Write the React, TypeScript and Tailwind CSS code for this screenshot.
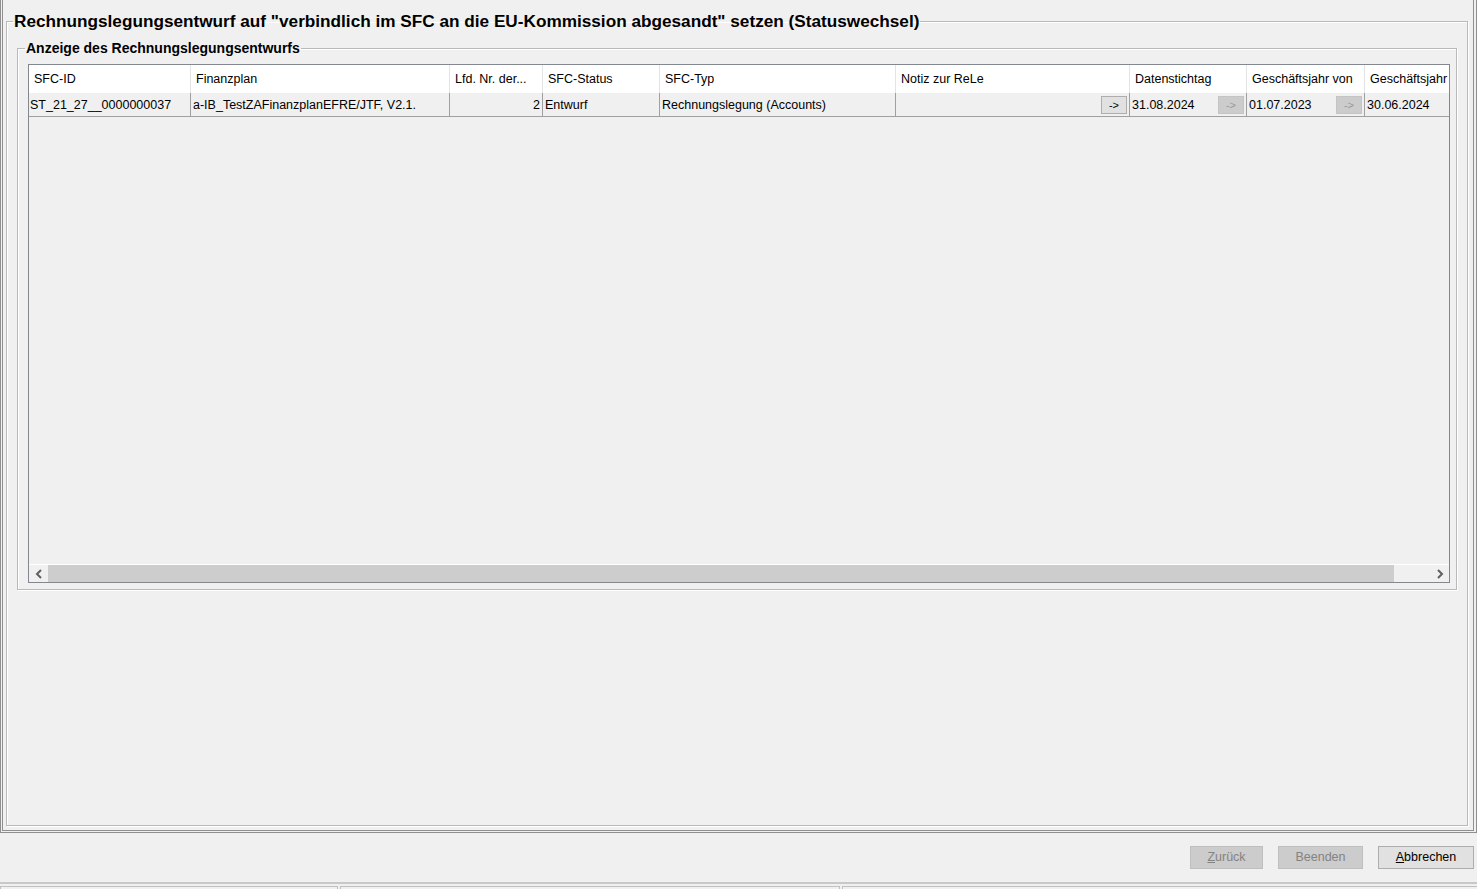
import React from "react";

type Col = { w: number; title: string };

const cols: Col[] = [
  { w: 162, title: "SFC-ID" },
  { w: 259, title: "Finanzplan" },
  { w: 93, title: "Lfd. Nr. der..." },
  { w: 117, title: "SFC-Status" },
  { w: 236, title: "SFC-Typ" },
  { w: 234, title: "Notiz zur ReLe" },
  { w: 117, title: "Datenstichtag" },
  { w: 118, title: "Geschäftsjahr von" },
  { w: 120, title: "Geschäftsjahr bis" },
];

const ArrowBtn: React.FC<{ disabled?: boolean }> = ({ disabled }) => (
  <span
    className={
      disabled
        ? "ml-auto mr-[2px] flex h-[18px] w-[26px] shrink-0 items-center justify-center border border-[#c4c4c4] bg-[#cccccc] text-[11px] text-[#9a9a9a]"
        : "ml-auto mr-[2px] flex h-[18px] w-[26px] shrink-0 items-center justify-center border border-[#adadad] bg-[#e1e1e1] text-[11px] text-black"
    }
  >
    -&gt;
  </span>
);

const rowCells: React.ReactNode[] = [
  <span className="pl-[1px]">ST_21_27__0000000037</span>,
  <span className="pl-[2px]">a-IB_TestZAFinanzplanEFRE/JTF, V2.1.</span>,
  <span className="ml-auto pr-[2px]">2</span>,
  <span className="pl-[2px]">Entwurf</span>,
  <span className="pl-[2px]">Rechnungslegung (Accounts)</span>,
  <ArrowBtn />,
  <>
    <span className="pl-[2px]">31.08.2024</span>
    <ArrowBtn disabled />
  </>,
  <>
    <span className="pl-[2px]">01.07.2023</span>
    <ArrowBtn disabled />
  </>,
  <span className="pl-[2px]">30.06.2024</span>,
];

const App: React.FC = () => {
  return (
    <div className="flex h-[889px] w-[1477px] flex-col overflow-hidden bg-[#f0f0f0] font-['Liberation_Sans',Arial,sans-serif] text-black">
      {/* main wizard panel */}
      <div className="h-[833px] shrink-0 border-b-[3px] border-l-[3px] border-r-[4px] border-double border-[#8f8f8f] pl-[3px] pr-[5px] pb-[4px] pt-[11px]">
        <fieldset className="h-full min-w-0 border border-[#b9b9b9] shadow-[1px_1px_0_#ffffff,inset_1px_1px_0_#ffffff]">
          <legend className="ml-[6px] px-[1px] text-[17.2px] font-bold leading-[20px]">
            Rechnungslegungsentwurf auf "verbindlich im SFC an die EU-Kommission abgesandt" setzen (Statuswechsel)
          </legend>

          <fieldset className="mx-[10px] mt-[10px] h-[549px] min-w-0 border border-[#b9b9b9] shadow-[1px_1px_0_#ffffff,inset_1px_1px_0_#ffffff]">
            <legend className="ml-[7px] px-[1px] text-[14px] font-bold leading-[15px]">
              Anzeige des Rechnungslegungsentwurfs
            </legend>

            <div className="pl-[10px] pr-[6px] pt-[8px]">
              {/* table */}
              <div className="flex h-[519px] flex-col overflow-hidden border border-[#828790] text-[12.5px]">
                <div className="flex h-[28px] shrink-0 bg-white">
                  {cols.map((c) => (
                    <div
                      key={c.title}
                      style={{ width: c.w }}
                      className="flex shrink-0 items-center overflow-hidden whitespace-nowrap border-r border-[#e3e3e3] pl-[5px]"
                    >
                      {c.title}
                    </div>
                  ))}
                </div>
                <div className="flex h-[24px] shrink-0 border-b border-[#a0a0a0]">
                  {cols.map((c, i) => (
                    <div
                      key={c.title}
                      style={{ width: c.w }}
                      className="flex shrink-0 items-center overflow-hidden whitespace-nowrap border-r border-[#a0a0a0] pt-[1px]"
                    >
                      {rowCells[i]}
                    </div>
                  ))}
                </div>
                <div className="flex-1" />
                {/* horizontal scrollbar */}
                <div className="flex h-[18px] shrink-0 items-center border-t border-white">
                  <div className="flex h-full w-[19px] items-center justify-center">
                    <svg width="8" height="10" viewBox="0 0 8 10">
                      <path d="M6 1 L2 5 L6 9" stroke="#606060" strokeWidth="2" fill="none" />
                    </svg>
                  </div>
                  <div className="h-full w-[1346px] bg-[#cdcdcd]" />
                  <div className="flex-1" />
                  <div className="flex h-full w-[19px] items-center justify-center">
                    <svg width="8" height="10" viewBox="0 0 8 10">
                      <path d="M2 1 L6 5 L2 9" stroke="#606060" strokeWidth="2" fill="none" />
                    </svg>
                  </div>
                </div>
              </div>
            </div>
          </fieldset>
        </fieldset>
      </div>

      {/* button bar */}
      <div className="flex flex-1 flex-col">
        <div className="mt-[13px] flex h-[23px] justify-end gap-[15px] pr-[3px] text-[12.5px]">
          <div className="flex w-[73px] items-center justify-center border border-[#bfbfbf] bg-[#cccccc] text-[#838383]">
            <span>
              <span className="underline">Z</span>urück
            </span>
          </div>
          <div className="flex w-[85px] items-center justify-center border border-[#bfbfbf] bg-[#cccccc] text-[#838383]">
            Beenden
          </div>
          <div className="flex w-[96px] items-center justify-center border border-[#adadad] bg-[#e1e1e1]">
            <span>
              <span className="underline">A</span>bbrechen
            </span>
          </div>
        </div>
        {/* status bar */}
        <div className="mt-[13px] flex flex-1 flex-col border-t-2 border-[#c8c8c8]">
          <div className="mt-[2px] flex flex-1 gap-[2px]">
            <div className="w-[338px] border-l border-r border-t border-[#c0c0c0]" />
            <div className="w-[500px] border-l border-r border-t border-[#c0c0c0]" />
            <div className="flex-1 border-l border-t border-[#c0c0c0]" />
          </div>
        </div>
      </div>
    </div>
  );
};

export default App;
